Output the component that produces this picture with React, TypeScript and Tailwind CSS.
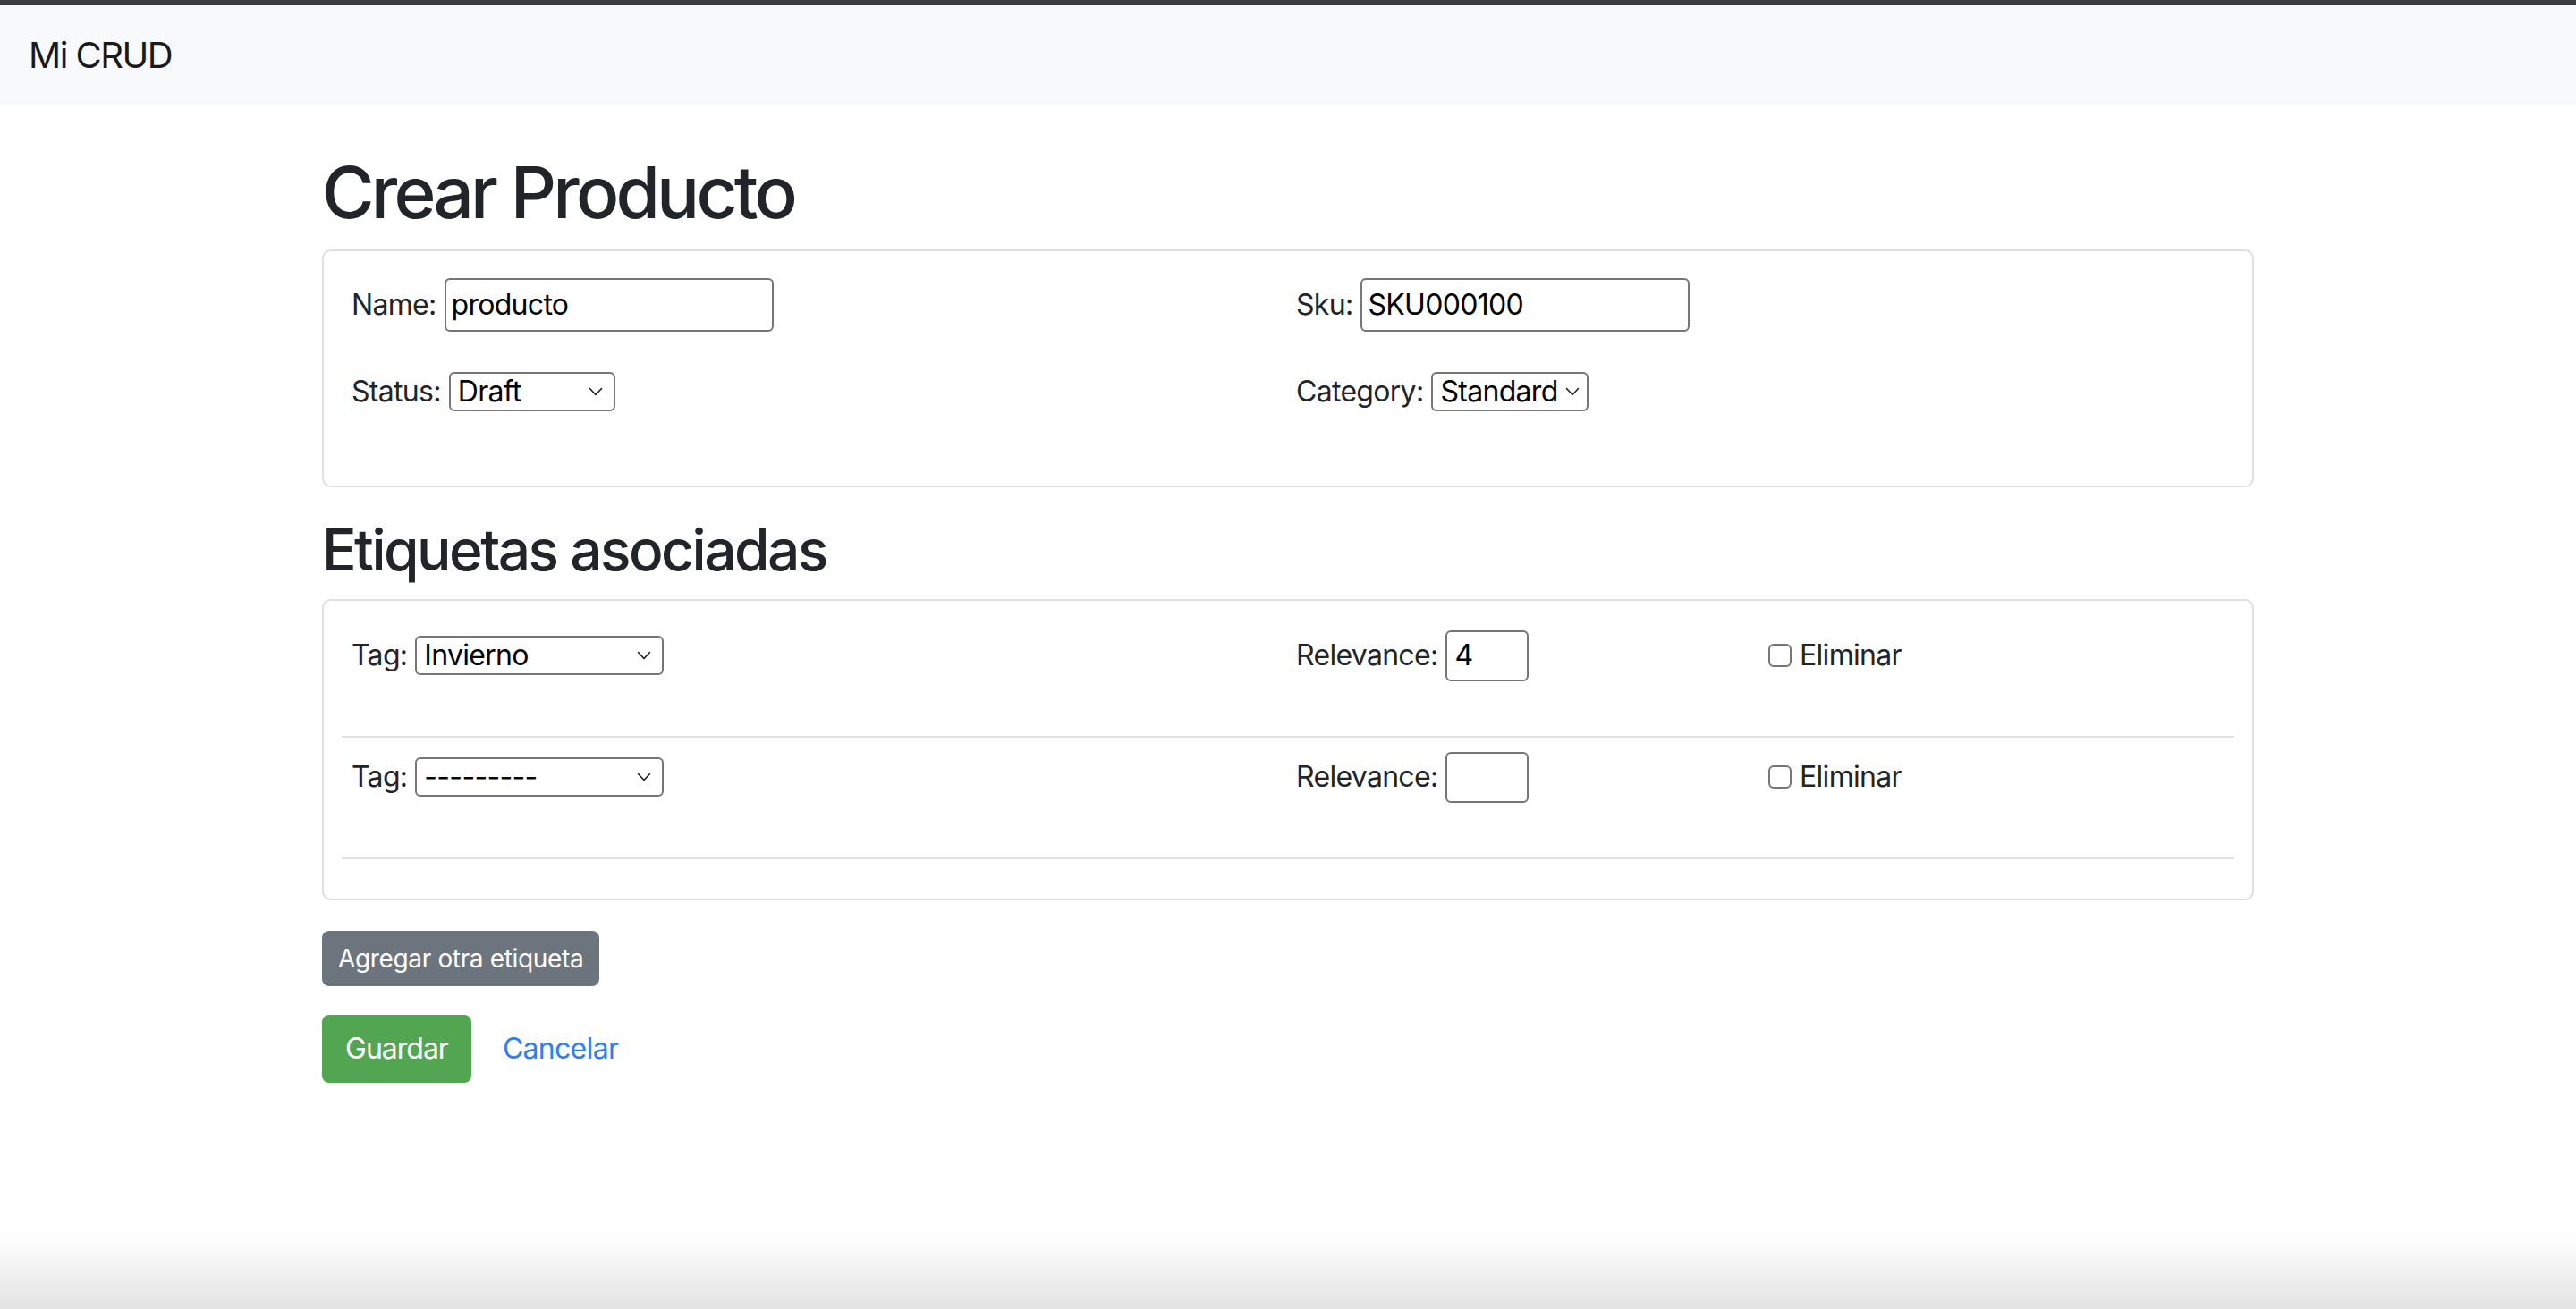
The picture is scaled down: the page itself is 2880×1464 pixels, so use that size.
import React from 'react';

function Chevron() {
  return (
    <svg className="h-[10px] w-[16px] shrink-0" viewBox="0 0 16 10" fill="none">
      <path d="M1.5 1.5L8 8.5l6.5-7" stroke="#1f1f1f" strokeWidth={1.6} strokeLinecap="round" strokeLinejoin="round" />
    </svg>
  );
}

interface FakeSelectProps {
  value: string;
  width: string;
  padRight?: string;
}

function FakeSelect({ value, width, padRight = 'pr-[12px]' }: FakeSelectProps) {
  return (
    <div className={`flex h-[44px] items-center justify-between gap-[6px] rounded-[6px] border-2 border-[#767676] bg-white pl-[8px] text-black ${padRight} ${width}`}>
      <span className="leading-none">{value}</span>
      <Chevron />
    </div>
  );
}

function TagRow({ tag, relevance }: { tag: string; relevance: string }) {
  return (
    <>
      <div className="grid grid-cols-[1056px_528px_1fr] items-center pl-[11px] pt-[2px]">
        <div className="flex items-center gap-[9px]">
          <span>Tag:</span>
          <FakeSelect value={tag} width="w-[278px]" />
        </div>
        <div className="flex items-center gap-[9px]">
          <span>Relevance:</span>
          <div className="flex h-[57px] w-[93px] items-center rounded-[6px] border-2 border-[#767676] px-[8px] text-black">
            {relevance}
          </div>
        </div>
        <div className="flex items-center gap-[9px]">
          <span className="h-[26px] w-[26px] rounded-[6px] border-2 border-[#767676] bg-white" />
          <span>Eliminar</span>
        </div>
      </div>
      <hr className="mb-[14px] mt-[61px] border-t-2 border-[#dfe1e4]" />
    </>
  );
}

export default function App() {
  return (
    <div className="flex h-[1464px] flex-col bg-white font-['Inter','Liberation_Sans',sans-serif] text-[32px] leading-[1.5] tracking-[-0.7px] text-[#212529]">
      {/* window edge */}
      <div className="h-[6px] bg-[#3d3d3d]" />

      {/* Navbar */}
      <nav className="flex h-[111px] items-center bg-[#f8f9fa] px-[32px]">
        <span className="text-[40px] leading-[60px] tracking-[-1.5px] text-[#1a1a1a]">Mi CRUD</span>
      </nav>

      <main className="mx-auto w-[2160px] flex-1 pt-[50px]">
        <h1 className="mb-[16px] text-[80px] font-medium leading-[1.2] tracking-[-3.8px]">Crear Producto</h1>

        {/* Product card */}
        <div className="rounded-[10px] border-2 border-[#dfdfdf] px-[31px] pb-[81px] pt-[30px]">
          <div className="grid grid-cols-[1056px_1fr] items-center">
            <div className="flex items-center gap-[9px]">
              <span>Name:</span>
              <div className="flex h-[60px] w-[368px] items-center rounded-[6px] border-2 border-[#767676] px-[6px] text-black">
                producto
              </div>
            </div>
            <div className="flex items-center gap-[9px]">
              <span>Sku:</span>
              <div className="flex h-[60px] w-[368px] items-center rounded-[6px] border-2 border-[#767676] px-[6px] text-black">
                SKU000100
              </div>
            </div>
          </div>
          <div className="mt-[43px] grid grid-cols-[1056px_1fr] items-center">
            <div className="flex items-center gap-[9px]">
              <span>Status:</span>
              <FakeSelect value="Draft" width="w-[186px]" />
            </div>
            <div className="flex items-center gap-[9px]">
              <span>Category:</span>
              <FakeSelect value="Standard" width="w-[176px]" padRight="pr-[8px]" />
            </div>
          </div>
        </div>

        <h2 className="mb-[16px] mt-[32px] text-[64px] font-medium leading-[1.2] tracking-[-2.5px]">Etiquetas asociadas</h2>

        {/* Tags card */}
        <div className="rounded-[10px] border-2 border-[#dfdfdf] px-[20px] pb-[30px] pt-[31px]">
          <TagRow tag="Invierno" relevance="4" />
          <TagRow tag="---------" relevance="" />
        </div>

        <button className="mt-[34px] flex h-[62px] items-center rounded-[8px] bg-[#6c757d] px-[18px] text-[28px] tracking-[-0.35px] text-white">
          Agregar otra etiqueta
        </button>

        <div className="mt-[32px] flex items-center gap-[35px]">
          <button className="flex h-[76px] items-center rounded-[8px] bg-[#52a651] px-[26px] text-[32px] tracking-[-1px] text-white">
            Guardar
          </button>
          <span className="text-[#2f7cf6]">Cancelar</span>
        </div>
      </main>

      {/* window bottom shadow */}
      <div className="h-[84px] bg-gradient-to-b from-white to-[#e3e3e3]" />
    </div>
  );
}
